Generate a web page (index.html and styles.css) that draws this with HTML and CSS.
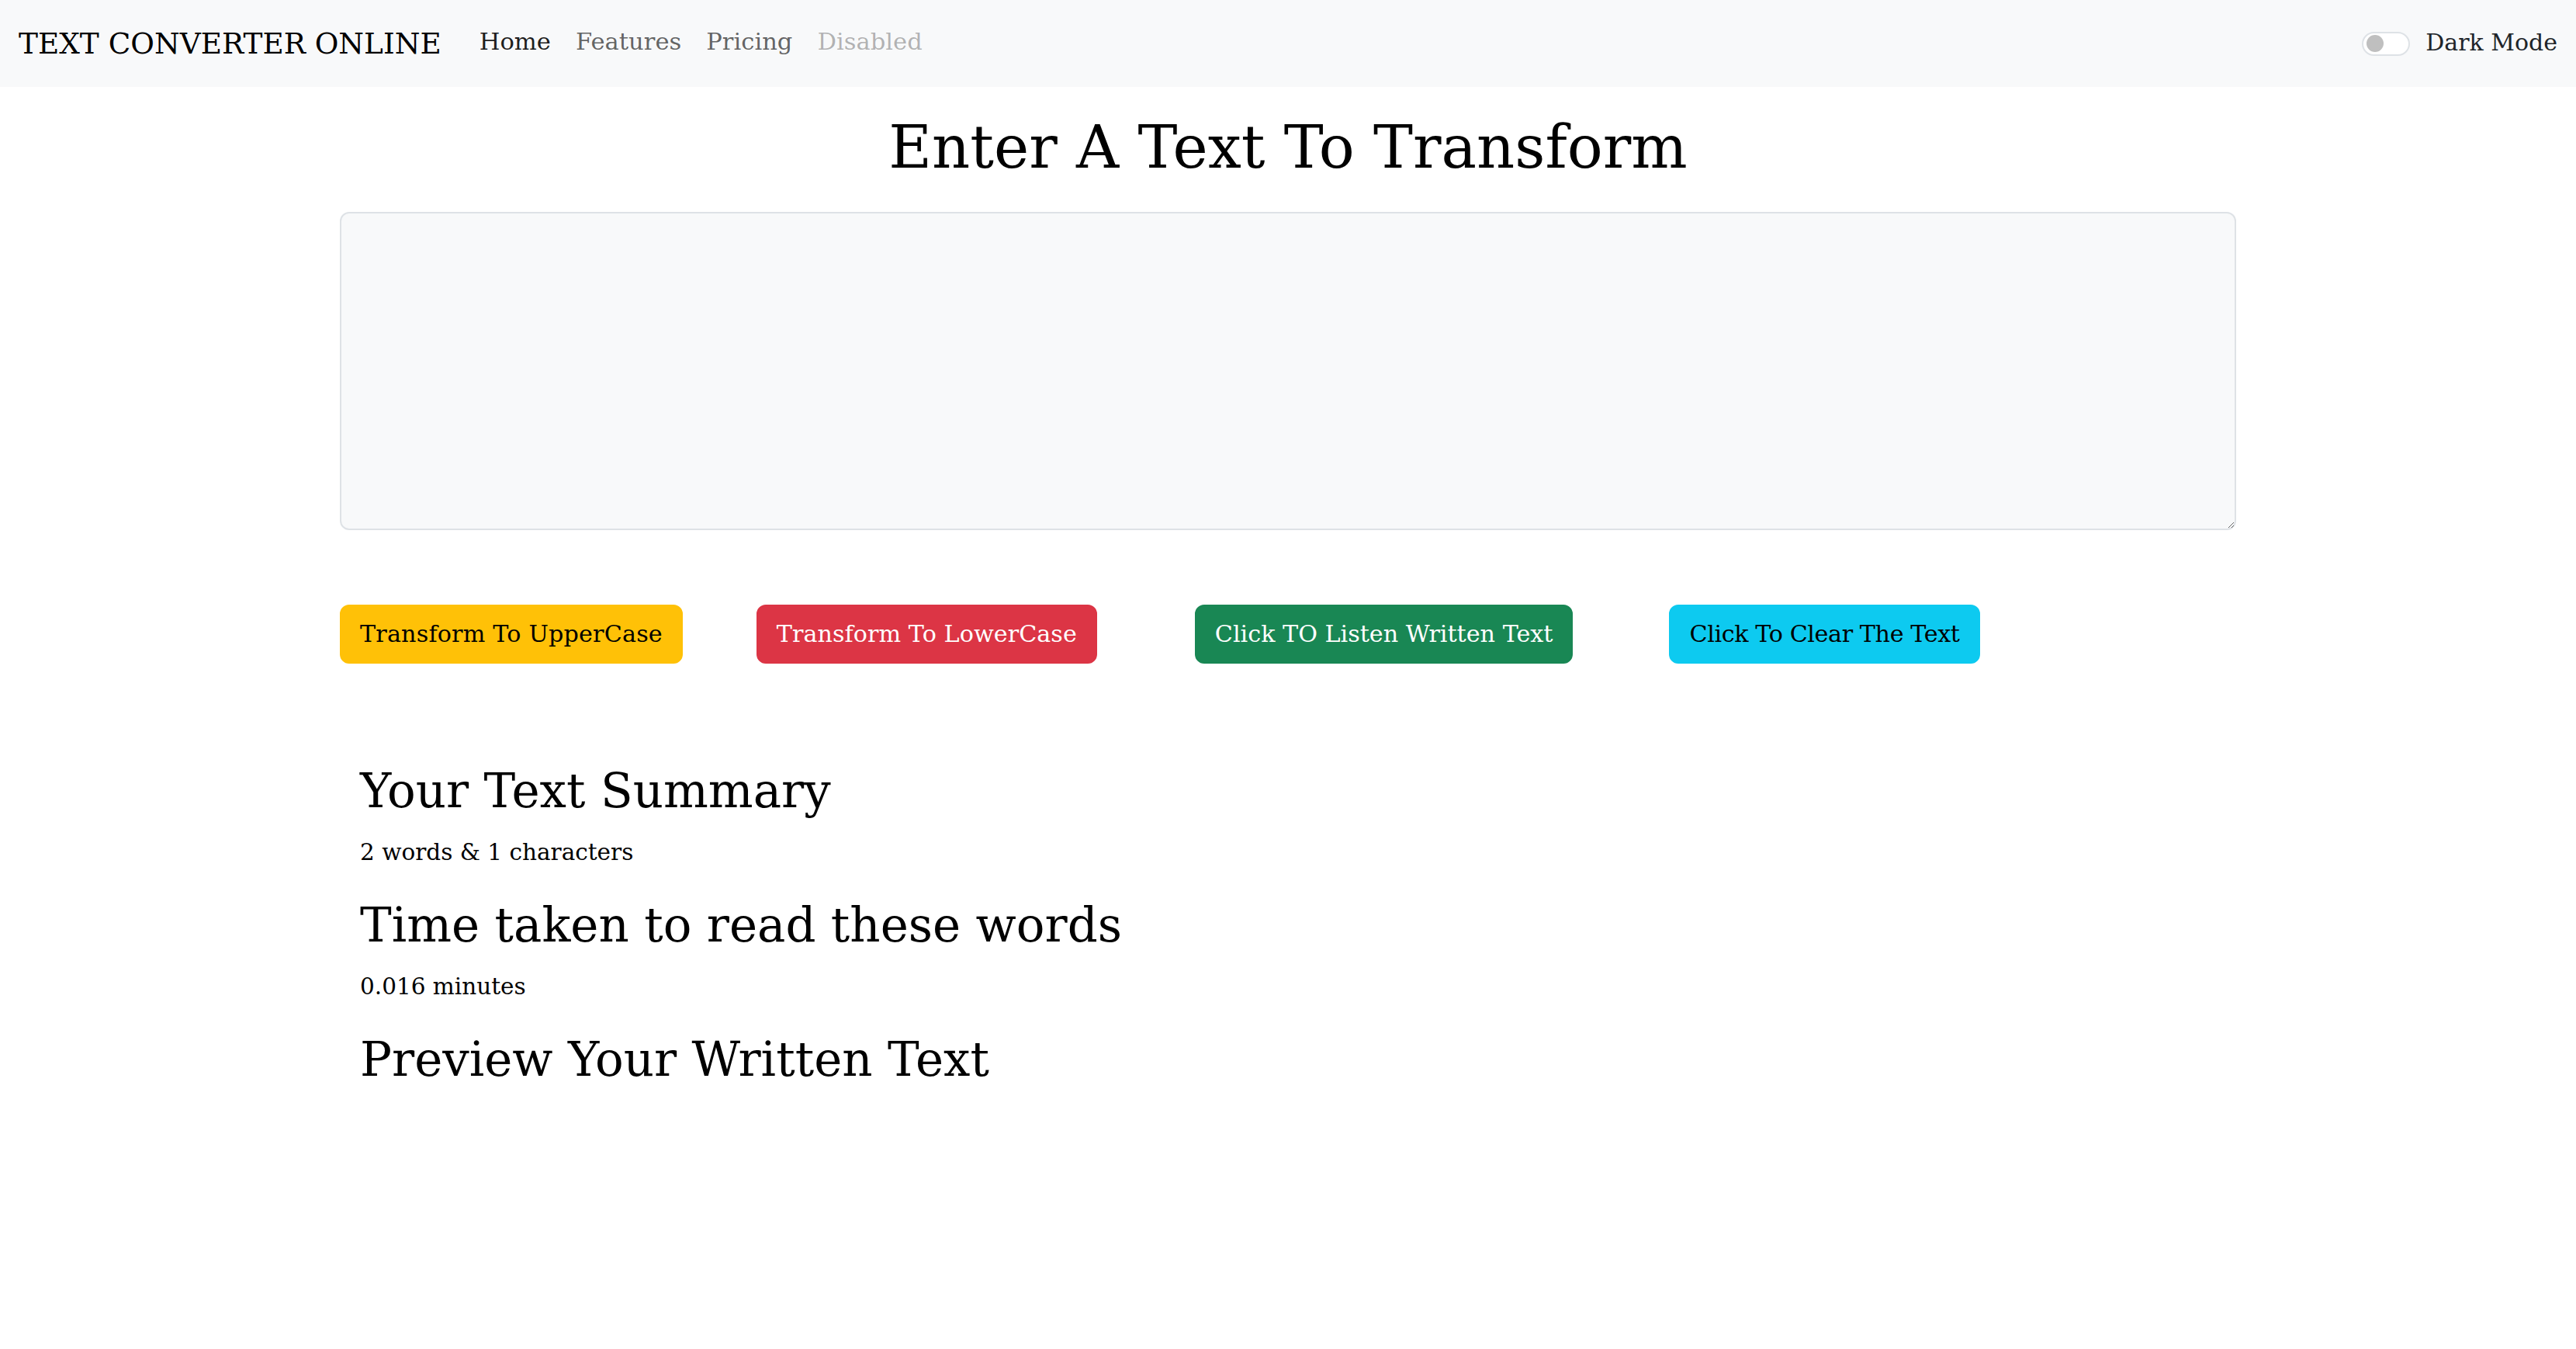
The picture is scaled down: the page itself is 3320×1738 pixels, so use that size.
FILE: index.html
```html
<!DOCTYPE html>
<html lang="en">
<head>
<meta charset="utf-8">
<title>Text Converter Online</title>
<link rel="stylesheet" href="styles.css">
</head>
<body>
<nav class="navbar">
  <a class="brand" href="#">TEXT CONVERTER ONLINE</a>
  <ul class="nav-links">
    <li><a class="nav-link active" href="#">Home</a></li>
    <li><a class="nav-link" href="#">Features</a></li>
    <li><a class="nav-link" href="#">Pricing</a></li>
    <li><a class="nav-link disabled" href="#">Disabled</a></li>
  </ul>
  <label class="switch-wrap">
    <span class="switch"><span class="knob"></span></span>
    <span class="switch-label">Dark Mode</span>
  </label>
</nav>

<main class="main">
  <h1 class="title">Enter A Text To Transform</h1>
  <textarea class="text-input" rows="8"></textarea>
  <div class="actions">
    <button class="btn btn-warning">Transform To UpperCase</button>
    <button class="btn btn-danger gap-sm">Transform To LowerCase</button>
    <button class="btn btn-success gap-md">Click TO Listen Written Text</button>
    <button class="btn btn-info gap-lg">Click To Clear The Text</button>
  </div>
  <section class="summary">
    <h2 class="sub">Your Text Summary</h2>
    <p class="info">2 words &amp; 1 characters</p>
    <h2 class="sub">Time taken to read these words</h2>
    <p class="info">0.016 minutes</p>
    <h2 class="sub">Preview Your Written Text</h2>
  </section>
</main>
</body>
</html>
```

FILE: styles.css
```css
* { box-sizing: border-box; }

html, body {
  margin: 0;
  padding: 0;
  background: #ffffff;
}

body {
  font-family: "DejaVu Serif", "Liberation Serif", serif;
  font-size: 30px;
  line-height: 48px;
  color: #212529;
}

/* ---------- navbar ---------- */
.navbar {
  height: 112px;
  background: #f8f9fa;
  display: flex;
  align-items: center;
  padding: 0 24px;
}

.brand {
  font-size: 37.4px;
  line-height: 60px;
  color: #000;
  text-decoration: none;
  margin-right: 33px;
}

.nav-links {
  list-style: none;
  margin: 0;
  padding: 0;
  display: flex;
  flex: 1;
}

.nav-link {
  display: block;
  padding: 14px 16px 18px;
  font-size: 30.6px;
  color: rgba(0, 0, 0, 0.62);
  text-decoration: none;
}

.nav-link.active { color: rgba(0, 0, 0, 0.9); }
.nav-link.disabled { color: rgba(0, 0, 0, 0.3); }

.switch-wrap {
  display: flex;
  align-items: center;
  gap: 20px;
}

.switch {
  width: 62px;
  height: 31px;
  border: 2px solid #dee2e6;
  border-radius: 31px;
  background: #fff;
  display: flex;
  align-items: center;
  padding-left: 4px;
}

.knob {
  width: 22px;
  height: 22px;
  border-radius: 50%;
  background: #bfbfbf;
}

.switch-label {
  color: #212529;
  padding-bottom: 2px;
}

/* ---------- main ---------- */
.main {
  width: 2444px;
  margin: 0 auto;
}

.title {
  margin: 30px 0 35px;
  font-size: 76.4px;
  line-height: 96px;
  font-weight: 400;
  text-align: center;
  color: #000;
}

.text-input {
  display: block;
  width: 100%;
  height: 410px;
  background: #f8f9fa;
  border: 2px solid #dee2e6;
  border-radius: 12px;
  padding: 12px 24px;
  font: inherit;
  color: #212529;
  resize: vertical;
}

.actions {
  display: flex;
  align-items: center;
  margin-top: 96px;
}

.btn {
  font: inherit;
  font-size: 30.2px;
  line-height: 48px;
  padding: 12px 24px;
  border: 2px solid transparent;
  border-radius: 12px;
  cursor: pointer;
}

.gap-sm { margin-left: 95px; }
.gap-md { margin-left: 126px; }
.gap-lg { margin-left: 124px; }

.btn-warning { background: #ffc107; border-color: #ffc107; color: #000; letter-spacing: 0.18px; }
.btn-danger { background: #dc3545; border-color: #dc3545; color: #fff; letter-spacing: 0.05px; }
.btn-success { background: #198754; border-color: #198754; color: #fff; }
.btn-info { background: #0dcaf0; border-color: #0dcaf0; color: #000; letter-spacing: -0.4px; }

.summary {
  padding: 0 26px;
  margin-top: 126px;
}

.sub {
  font-size: 61px;
  line-height: 76.8px;
  font-weight: 400;
  margin: 0 0 16px;
  color: #000;
}

.info {
  font-size: 29.5px;
  margin: 0 0 32px;
  color: #000;
}
```
